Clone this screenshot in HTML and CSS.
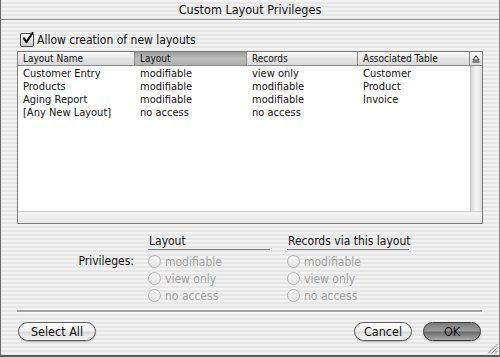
FILE: index.html
```html
<!DOCTYPE html>
<html lang="en">
<head>
  <meta charset="UTF-8">
  <title>Custom Layout Privileges</title>
  <link rel="stylesheet" href="styles.css">
</head>
<body>
<div class="window">
  <div class="titlebar">Custom Layout Privileges</div>

  <div class="content">
    <label class="allow">
      <span class="checkbox">
        <svg width="13" height="13" viewBox="0 0 13 13">
          <path d="M3 6.5 L5.5 10 L11.5 1" fill="none" stroke="#111" stroke-width="2.2" stroke-linecap="round" stroke-linejoin="round"/>
        </svg>
      </span>
      Allow creation of new layouts
    </label>

    <!-- layout list -->
    <div class="list">
      <div class="list-head">
        <div class="hcell">Layout Name</div>
        <div class="hcell sorted">Layout</div>
        <div class="hcell">Records</div>
        <div class="hcell">Associated Table</div>
        <div class="hcell corner">
          <svg width="8" height="8" viewBox="0 0 8 8">
            <path d="M4 0.8 L7 5 L1 5 Z" fill="#fff" stroke="#222" stroke-width="1"/>
            <line x1="0.5" y1="7" x2="7.5" y2="7" stroke="#222" stroke-width="1"/>
          </svg>
        </div>
      </div>
      <div class="list-main">
        <div class="rows">
          <div class="row"><span>Customer Entry</span><span>modifiable</span><span>view only</span><span>Customer</span></div>
          <div class="row"><span>Products</span><span>modifiable</span><span>modifiable</span><span>Product</span></div>
          <div class="row"><span>Aging Report</span><span>modifiable</span><span>modifiable</span><span>Invoice</span></div>
          <div class="row"><span>[Any New Layout]</span><span>no access</span><span>no access</span><span></span></div>
        </div>
        <div class="vscroll"></div>
      </div>
      <div class="list-foot"></div>
    </div>

    <div class="privileges">
      <div class="priv-label">Privileges:</div>
      <div class="group">
        <div class="group-title">Layout</div>
        <div class="radio"><span class="dot"></span>modifiable</div>
        <div class="radio"><span class="dot"></span>view only</div>
        <div class="radio"><span class="dot"></span>no access</div>
      </div>
      <div class="group">
        <div class="group-title">Records via this layout</div>
        <div class="radio"><span class="dot"></span>modifiable</div>
        <div class="radio"><span class="dot"></span>view only</div>
        <div class="radio"><span class="dot"></span>no access</div>
      </div>
    </div>

    <div class="separator"></div>

    <div class="buttons">
      <button class="btn select-all">Select All</button>
      <div class="spacer"></div>
      <button class="btn cancel">Cancel</button>
      <button class="btn default">OK</button>
    </div>
  </div>

  <svg class="grip" width="11" height="11" viewBox="0 0 11 11">
    <line x1="10.5" y1="1" x2="1" y2="10.5" stroke="#8a8a8a" stroke-width="1"/>
    <line x1="10.5" y1="4.5" x2="4.5" y2="10.5" stroke="#8a8a8a" stroke-width="1"/>
    <line x1="10.5" y1="8" x2="8" y2="10.5" stroke="#8a8a8a" stroke-width="1"/>
  </svg>
</div>
</body>
</html>
```

FILE: styles.css
```css
body {
    margin: 0;
    font-family: "DejaVu Sans Condensed", "DejaVu Sans", sans-serif;
    font-size: 12px;
    color: #111;
    background: #fff;
}
.window {
    position: relative;
    width: 500px;
    height: 357px;
    box-sizing: border-box;
    border-left: 1px solid #6a6a6a;
    border-right: 1px solid #8a8a8a;
    border-bottom: 2px solid #5a5a5a;
    background: repeating-linear-gradient(to bottom, #f3f3f3 0px, #f3f3f3 2px, #e6e6e6 2px, #e6e6e6 4px);
}
.titlebar {
    height: 19px;
    line-height: 20px;
    text-align: center;
    font-size: 12.5px;
    border-bottom: 1px solid #8c8c8c;
    box-shadow: 0 1px 0 #fafafa;
}
.content {
    padding: 12px 16px 0 16px;
}

/* checkbox line */
.allow {
    display: flex;
    align-items: center;
    height: 16px;
    font-size: 12px;
    padding-left: 3px;
}
.checkbox {
    width: 12px;
    height: 12px;
    margin-right: 3px;
    border: 1px solid #4a4a4a;
    border-radius: 2px;
    background: linear-gradient(#fdfdfd, #cfcfcf);
    position: relative;
}
.checkbox svg {
    position: absolute;
    left: 0;
    top: -2px;
}

/* list box */
.list {
    margin-top: 3px;
    height: 173px;
    box-sizing: border-box;
    border: 1px solid #7c7c7c;
    background: #fff;
    display: flex;
    flex-direction: column;
}
.list-head {
    display: grid;
    grid-template-columns: 117px 112px 111px 112px 12px;
    height: 14px;
    box-sizing: border-box;
    border-bottom: 1px solid #8a8a8a;
    font-size: 10px;
}
.hcell {
    padding-left: 5px;
    line-height: 13px;
    white-space: nowrap;
    border-right: 1px solid #8a8a8a;
    background: linear-gradient(#fbfbfb, #e4e4e4 55%, #d8d8d8);
}
.hcell.sorted {
    background: linear-gradient(#9c9c9c, #bdbdbd 50%, #b0b0b0);
}
.hcell.corner {
    padding-left: 2px;
    border-right: none;
    display: flex;
    align-items: center;
}
.list-main {
    flex: 1;
    display: flex;
}
.rows {
    flex: 1;
    padding-top: 1px;
    font-size: 11px;
}
.row {
    display: grid;
    grid-template-columns: 117px 112px 111px 112px;
    height: 13px;
    line-height: 13px;
}
.row span {
    padding-left: 5px;
    white-space: nowrap;
}
.vscroll {
    width: 11px;
    border-left: 1px solid #c8c8c8;
    background: linear-gradient(to right, #d6d6d6, #f6f6f6 45%, #efefef 70%, #dadada);
}
.list-foot {
    height: 11px;
    border-top: 1px solid #cfcfcf;
    background: linear-gradient(#f4f4f4, #e8e8e8);
}

/* privileges */
.privileges {
    display: flex;
    margin-top: 10px;
}
.priv-label {
    width: 117px;
    text-align: right;
    padding-top: 19px;
    line-height: 17px;
    margin-right: 14px;
}
.group {
    width: 122px;
    margin-right: 17px;
}
.group-title {
    line-height: 15px;
    padding-left: 1px;
    white-space: nowrap;
    border-bottom: 1px solid #7a7a7a;
    margin-bottom: 3px;
}
.radio {
    display: flex;
    align-items: center;
    height: 17px;
    color: #a2a2a2;
}
.dot {
    width: 11px;
    height: 11px;
    margin-right: 4px;
    border: 1px solid #b4b4b4;
    border-radius: 50%;
    background: linear-gradient(#f8f8f8, #e2e2e2);
}

.separator {
    margin-top: 6px;
    margin-right: 1px;
    border-top: 2px solid #a4a4a4;
    border-bottom: 1px solid #f8f8f8;
}

/* buttons */
.buttons {
    display: flex;
    margin-top: 9px;
    padding: 0 2px 0 1px;
}
.spacer {
    flex: 1;
}
.btn {
    height: 19px;
    padding: 0;
    font-family: inherit;
    font-size: 12.5px;
    color: #111;
    border: 1px solid #5e5e5e;
    border-radius: 10px;
    background: linear-gradient(#ffffff, #f0f0f0 45%, #dcdcdc 55%, #f4f4f4);
    box-shadow: 0 1px 1px rgba(0, 0, 0, 0.25);
}
.select-all {
    width: 78px;
}
.cancel {
    width: 58px;
    margin-right: 11px;
}
.default {
    width: 58px;
    border-color: #3a3a3a;
    background: linear-gradient(#7c7c7c, #9a9a9a 45%, #6c6c6c 55%, #aaaaaa);
}
.grip {
    position: absolute;
    right: 1px;
    bottom: 1px;
}
```
